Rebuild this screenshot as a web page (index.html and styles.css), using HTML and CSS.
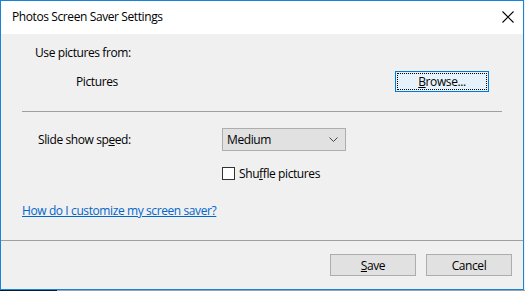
FILE: index.html
```html
<!DOCTYPE html>
<html lang="en">
<head>
    <meta charset="UTF-8">
    <title>Photos Screen Saver Settings</title>
    <link rel="stylesheet" href="styles.css">
</head>
<body>
    <div class="window">
        <div class="titlebar">
            <span class="title">Photos Screen Saver Settings</span>
            <svg class="close" width="12" height="12" viewBox="0 0 12 12">
                <path d="M0.5 0.5 L11.5 11.5 M11.5 0.5 L0.5 11.5" stroke="#000" stroke-width="1.1" fill="none"/>
            </svg>
        </div>

        <div class="content">
            <p class="label">Use pictures from:</p>
            <div class="folder-row">
                <span class="folder">Pictures</span>
                <button class="btn btn-default"><span class="focus"><u>B</u>rowse...</span></button>
            </div>

            <div class="separator"></div>

            <div class="speed-row">
                <span class="speed-label">Slide show sp<u>e</u>ed:</span>
                <div class="select">
                    <span>Medium</span>
                    <svg width="9" height="5" viewBox="0 0 9 5">
                        <path d="M0.5 0.5 L4.5 4.5 L8.5 0.5" stroke="#444" stroke-width="1" fill="none"/>
                    </svg>
                </div>
            </div>

            <label class="check-row">
                <span class="checkbox"></span>
                <span>Shu<u>f</u>fle pictures</span>
            </label>

            <a class="help" href="#">How do I customize my screen saver?</a>
        </div>

        <div class="footer">
            <button class="btn"><u>S</u>ave</button>
            <button class="btn">Cancel</button>
        </div>
    </div>
    <div class="taskbar"></div>
</body>
</html>
```

FILE: styles.css
```css
body {
    margin: 0;
    background: #f0f0f0;
    font-family: 'Open Sans', 'Noto Sans', sans-serif;
    font-size: 12px;
    letter-spacing: -0.4px;
    color: #000;
}

.window {
    width: 522px;
    height: 288px;
    border: 1px solid #1883d7;
    display: flex;
    flex-direction: column;
    background: #f0f0f0;
}

.titlebar {
    height: 33px;
    flex-shrink: 0;
    background: #fff;
    display: flex;
    align-items: center;
    justify-content: space-between;
    padding: 0 9px 0 11px;
}

.title {
    padding-bottom: 2px;
}

.close {
    margin-bottom: 1px;
}

.content {
    flex: 1;
    display: flex;
    flex-direction: column;
    padding: 11px 21px 0 21px;
}

.label {
    margin: 0;
    padding-left: 13px;
    line-height: 16px;
}

.folder-row {
    display: flex;
    align-items: center;
    justify-content: space-between;
    margin-top: 10px;
    padding-left: 54px;
    padding-right: 13px;
}

.btn {
    font-family: inherit;
    font-size: 12px;
    letter-spacing: -0.4px;
    width: 86px;
    height: 22px;
    padding: 0;
    background: #e1e1e1;
    border: 1px solid #adadad;
    color: #000;
}

.btn-default {
    width: 94px;
    height: 21px;
    background: #e5f1fb;
    border-color: #0078d7;
    padding: 1px;
}

.focus {
    display: block;
    height: 100%;
    border: 1px dotted #000;
    box-sizing: border-box;
    line-height: 15px;
}

.separator {
    height: 1px;
    background: #a0a0a0;
    margin-top: 19px;
}

.speed-row {
    display: flex;
    align-items: center;
    margin-top: 16px;
}

.speed-label {
    width: 184px;
    padding-left: 16px;
}

.select {
    width: 111px;
    height: 21px;
    background: #e1e1e1;
    border: 1px solid #adadad;
    display: flex;
    align-items: center;
    justify-content: space-between;
    padding: 0 7px 0 4px;
}

.check-row {
    display: flex;
    align-items: center;
    gap: 4px;
    margin-top: 14px;
    margin-left: 200px;
}

.checkbox {
    width: 11px;
    height: 11px;
    border: 1px solid #333;
    background: #fff;
}

.help {
    margin-top: 20px;
    color: #0066cc;
    align-self: flex-start;
}

.footer {
    box-sizing: border-box;
    height: 49px;
    flex-shrink: 0;
    border-top: 1px solid #a0a0a0;
    display: flex;
    justify-content: flex-end;
    align-items: flex-start;
    gap: 10px;
    padding: 13px 11px 0 0;
}

.taskbar {
    height: 1px;
    background: linear-gradient(90deg, #0a1a2e 0 57px, #9aa4ae 57px);
}
```
